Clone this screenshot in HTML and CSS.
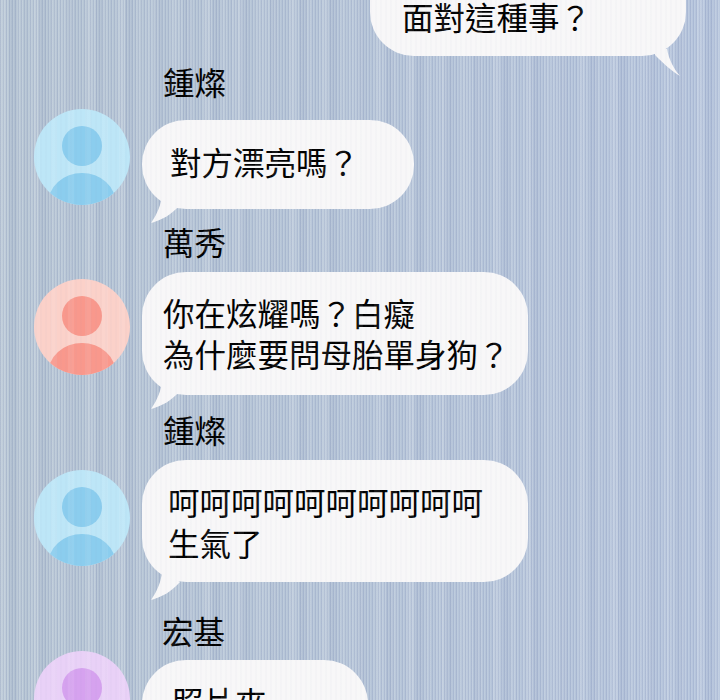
FILE: index.html
```html
<!DOCTYPE html>
<html lang="zh-Hant">
<head>
  <meta charset="UTF-8">
  <meta name="viewport" content="width=device-width, initial-scale=1.0">
  <title>聊天</title>
  <link rel="stylesheet" href="styles.css">
</head>

<body>
<svg class="defs" width="0" height="0" aria-hidden="true">
  <defs>
    <clipPath id="avatar-clip"><circle cx="48" cy="48" r="48"/></clipPath>
    <symbol id="avatar" viewBox="0 0 96 96">
      <circle class="avatar-bg" cx="48" cy="48" r="48"/>
      <circle class="avatar-fg" cx="48" cy="37" r="20"/>
      <g clip-path="url(#avatar-clip)">
        <ellipse class="avatar-fg" cx="48" cy="95" rx="34" ry="31"/>
      </g>
    </symbol>
    <symbol id="tail-left" viewBox="0 0 30 30">
      <path d="M12 0 C11 9 8 18 1 28 C12 25 21 20 30 10 Z"/>
    </symbol>
  </defs>
</svg>

<div class="page">
  <div class="chat">
    <div class="bubble bubble-me">
      <p>面對這種事？</p>
      <svg class="tail-right" viewBox="0 0 30 32"><path d="M0 9 C8 17 15 24 25 30 C19 23 14 14 12 3 L0 0 Z"/></svg>
    </div>

    <div class="msg msg-1 blue">
      <div class="name">鍾燦</div>
      <svg class="avatar"><use href="#avatar"/></svg>
      <div class="bubble">
        <p>對方漂亮嗎？</p>
        <svg class="tail-left"><use href="#tail-left"/></svg>
      </div>
    </div>

    <div class="msg msg-2 pink">
      <div class="name">萬秀</div>
      <svg class="avatar"><use href="#avatar"/></svg>
      <div class="bubble">
        <p>你在炫耀嗎？白癡<br>為什麼要問母胎單身狗？</p>
        <svg class="tail-left"><use href="#tail-left"/></svg>
      </div>
    </div>

    <div class="msg msg-3 blue">
      <div class="name">鍾燦</div>
      <svg class="avatar"><use href="#avatar"/></svg>
      <div class="bubble">
        <p>呵呵呵呵呵呵呵呵呵呵<br>生氣了</p>
        <svg class="tail-left"><use href="#tail-left"/></svg>
      </div>
    </div>

    <div class="msg msg-4 purple">
      <div class="name">宏基</div>
      <svg class="avatar"><use href="#avatar"/></svg>
      <div class="bubble">
        <p>照片來</p>
      </div>
    </div>
  </div>
</div>
</body>
</html>
```

FILE: styles.css
```css
/* page */
html, body {
  margin: 0;
  padding: 0;
}

body {
  font-family: "Noto Sans CJK TC", "Liberation Sans", sans-serif;
  color: #000;
}

.defs {
  display: block;
}

.page {
  position: relative;
  width: 720px;
  height: 700px;
  overflow: hidden;
  background-color: #b7c6db;
  background-image:
    repeating-linear-gradient(90deg, rgba(115, 130, 175, 0.2) 0 1px, rgba(225, 232, 240, 0.16) 1px 2px, transparent 2px 3px),
    repeating-linear-gradient(90deg, rgba(225, 232, 240, 0.12) 0 9px, rgba(120, 135, 175, 0.08) 9px 17px, transparent 17px 29px),
    linear-gradient(90deg, rgba(183, 198, 210, 0.8), rgba(183, 198, 222, 0.8));
}

/* faint stripes run over the bubbles and avatars as well */
.page::after {
  content: "";
  position: absolute;
  top: 0;
  left: 0;
  right: 0;
  bottom: 0;
  pointer-events: none;
  background-image:
    repeating-linear-gradient(90deg, rgba(130, 140, 180, 0.03) 0 2px, transparent 2px 5px),
    repeating-linear-gradient(90deg, rgba(255, 255, 255, 0.07) 0 6px, transparent 6px 17px);
}

.chat {
  display: flex;
  flex-direction: column;
  margin-top: -61px;
}

/* bubbles */
.bubble {
  position: relative;
  box-sizing: border-box;
  background-color: #f8f7f8;
  border-radius: 44px;
}

.bubble p {
  margin: 0;
  font-size: 31.5px;
  line-height: 41px;
  white-space: nowrap;
}

.bubble-me {
  align-self: flex-start;
  width: 316px;
  margin-left: 370px;
  padding: 57px 0 19px 32px;
}

.tail-right {
  position: absolute;
  right: 1px;
  bottom: -22px;
  width: 30px;
  height: 32px;
  fill: #f8f7f8;
}

.tail-left {
  position: absolute;
  left: 8px;
  bottom: -16px;
  width: 30px;
  height: 30px;
  fill: #f8f7f8;
}

/* one message: name above, avatar left, bubble right */
.msg {
  display: grid;
  grid-template-columns: 96px auto;
  column-gap: 12px;
  justify-content: start;
  padding-left: 34px;
}

.name {
  grid-column: 2;
  padding-left: 21px;
  font-size: 31.5px;
  line-height: 36px;
}

.avatar {
  grid-column: 1;
  width: 96px;
  height: 96px;
}

.avatar-bg {
  fill: var(--avatar-bg);
}

.avatar-fg {
  fill: var(--avatar-fg);
}

.blue {
  --avatar-bg: #bde6f7;
  --avatar-fg: #8bcdee;
}

.pink {
  --avatar-bg: #fbd1c9;
  --avatar-fg: #f9988c;
}

.purple {
  --avatar-bg: #e9d1f7;
  --avatar-fg: #d6a2ef;
}

.msg-1 {
  margin-top: 7px;
}
.msg-1 .avatar {
  margin-top: 10px;
}
.msg-1 .bubble {
  width: 272px;
  margin-top: 21px;
  padding: 21px 0 27px 28px;
}

.msg-2 {
  margin-top: 14px;
}
.msg-2 .avatar {
  margin-top: 20px;
}
.msg-2 .bubble {
  width: 386px;
  margin-top: 13px;
  padding: 20px 0 21px 21px;
}

.msg-3 {
  margin-top: 16px;
}
.msg-3 .avatar {
  margin-top: 23px;
}
.msg-3 .bubble {
  width: 386px;
  margin-top: 13px;
  padding: 21px 0 19px 26px;
}
.msg-3 .tail-left {
  bottom: -20px;
}

.msg-4 {
  margin-top: 30px;
}
.msg-4 .name {
  padding-left: 20px;
}
.msg-4 .avatar {
  margin-top: 3px;
}
.msg-4 .bubble {
  width: 226px;
  margin-top: 12px;
  padding: 21px 0 27px 30px;
}
```
